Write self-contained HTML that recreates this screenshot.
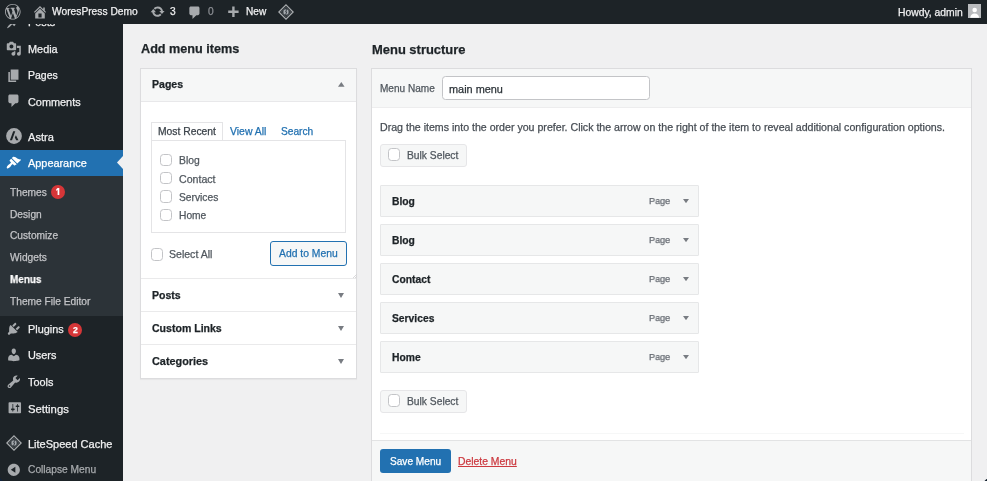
<!DOCTYPE html>
<html><head><meta charset="utf-8"><style>
html,body{margin:0;padding:0;width:987px;height:481px;overflow:hidden;background:#f0f0f1}
body{position:relative;font-family:"Liberation Sans",sans-serif}
.t{position:absolute;line-height:1;white-space:nowrap;will-change:transform;-webkit-text-stroke:0.25px currentColor}
svg{display:block}
</style></head><body>
<div style="position:absolute;left:0.00px;top:0.00px;width:987.00px;height:481.00px;background:#f0f0f1"></div>
<div style="position:absolute;left:0.00px;top:0.00px;width:123.00px;height:481.00px;background:#1d2327"></div>
<div class="t" style="left:28.00px;top:17.00px;font-size:10.90px;color:#f0f0f1;">Posts</div>
<div class="t" style="left:28.00px;top:44.00px;font-size:10.90px;color:#f0f0f1;">Media</div>
<div class="t" style="left:28.00px;top:70.00px;font-size:10.50px;color:#f0f0f1;">Pages</div>
<div class="t" style="left:28.00px;top:97.00px;font-size:10.90px;color:#f0f0f1;">Comments</div>
<div class="t" style="left:28.00px;top:132.00px;font-size:11.10px;color:#f0f0f1;">Astra</div>
<div style="position:absolute;left:0.00px;top:149.60px;width:123.00px;height:26.40px;background:#2271b1"></div>
<div class="t" style="left:28.00px;top:158.00px;font-size:10.90px;color:#fff;">Appearance</div>
<svg style="position:absolute;left:117.00px;top:156.40px" width="6.00" height="13.00" viewBox="0 0 6 13"><path d="M6 0 L0 6.5 L6 13Z" fill="#f0f0f1"/></svg>
<div style="position:absolute;left:0.00px;top:176.00px;width:123.00px;height:139.60px;background:#2c3338"></div>
<div class="t" style="left:9.60px;top:188.00px;font-size:10.20px;color:#c3c4c7;">Themes</div>
<div style="position:absolute;left:50.80px;top:184.90px;width:14.00px;height:14.00px;background:#d63638;border-radius:50%"></div>
<svg style="position:absolute;left:55.60px;top:188.30px" width="4.00" height="7.00" viewBox="0 0 4 7"><path fill="#fff" d="M1.6 0H3.3V7H1.6V2.1L0.2 2.9V1.2z"/></svg>
<div class="t" style="left:9.60px;top:210.00px;font-size:10.20px;color:#c3c4c7;">Design</div>
<div class="t" style="left:9.60px;top:231.00px;font-size:10.20px;color:#c3c4c7;">Customize</div>
<div class="t" style="left:9.60px;top:253.00px;font-size:10.20px;color:#c3c4c7;">Widgets</div>
<div class="t" style="left:9.60px;top:274.00px;font-size:11.11px;color:#fff;font-weight:700;transform:scaleX(0.8929);transform-origin:0 0;">Menus</div>
<div class="t" style="left:9.60px;top:297.00px;font-size:10.20px;color:#c3c4c7;">Theme File Editor</div>
<div class="t" style="left:28.00px;top:324.00px;font-size:10.90px;color:#f0f0f1;">Plugins</div>
<div style="position:absolute;left:68.20px;top:323.20px;width:14.20px;height:14.00px;background:#d63638;border-radius:50%"></div>
<div class="t" style="left:72.90px;top:326.00px;font-size:8.60px;color:#fff;font-weight:700;">2</div>
<div class="t" style="left:28.00px;top:350.00px;font-size:10.90px;color:#f0f0f1;">Users</div>
<div class="t" style="left:28.00px;top:377.00px;font-size:10.90px;color:#f0f0f1;">Tools</div>
<div class="t" style="left:28.00px;top:404.00px;font-size:11.30px;color:#f0f0f1;">Settings</div>
<div class="t" style="left:28.00px;top:439.00px;font-size:11.00px;color:#f0f0f1;">LiteSpeed Cache</div>
<div class="t" style="left:28.00px;top:465.00px;font-size:10.22px;color:#a7aaad;">Collapse Menu</div>
<svg style="position:absolute;left:6.10px;top:14.34px" width="15.60" height="15.60" viewBox="0 0 20 20" preserveAspectRatio="none"><path fill="#a7aaad" d="M10.44 3.02l1.82-1.82 6.36 6.35-1.83 1.82c-1.05-.68-2.48-.57-3.41.36l-.75.75c-.92.93-1.04 2.35-.35 3.41l-1.83 1.82-2.41-2.41-2.8 2.79c-.42.42-3.38 2.71-3.8 2.29s1.86-3.39 2.28-3.81l2.79-2.79L4.1 9.36l1.83-1.82c1.05.69 2.48.57 3.4-.36l.75-.75c.93-.92 1.05-2.35.36-3.41z"/></svg>
<svg style="position:absolute;left:6.10px;top:41.00px" width="15.60" height="15.60" viewBox="0 0 20 20" preserveAspectRatio="none"><path fill="#a7aaad" d="M13 11V4c0-.55-.45-1-1-1h-1.67L9 1H5L3.67 3H2c-.55 0-1 .45-1 1v7c0 .55.45 1 1 1h10c.55 0 1-.45 1-1zM7 4.5c1.38 0 2.5 1.12 2.5 2.5S8.38 9.5 7 9.5 4.5 8.38 4.5 7 5.62 4.5 7 4.5zM14 6h5v10.5c0 1.38-1.12 2.5-2.5 2.5S14 17.88 14 16.5s1.12-2.5 2.5-2.5c.17 0 .34.02.5.05V9h-3V6zm-4 8.05V13h2v3.5c0 1.38-1.12 2.5-2.5 2.5S7 17.88 7 16.5 8.12 14 9.5 14c.17 0 .34.02.5.05z"/></svg>
<svg style="position:absolute;left:6.19px;top:67.50px" width="15.60" height="15.60" viewBox="0 0 20 20" preserveAspectRatio="none"><path fill="#a7aaad" d="M6 15V2h10v13H6zm-1 1h8v2H3V5h2v11z"/></svg>
<svg style="position:absolute;left:6.19px;top:93.10px" width="15.60" height="15.60" viewBox="0 0 20 20" preserveAspectRatio="none"><path fill="#a7aaad" d="M5 2h9c1.1 0 2 .9 2 2v7c0 1.1-.9 2-2 2h-2l-5 5v-5H5c-1.1 0-2-.9-2-2V4c0-1.1.9-2 2-2z"/></svg>
<svg style="position:absolute;left:6.00px;top:128.30px" width="16.00" height="16.00" viewBox="0 0 16 16"><circle cx="8" cy="8" r="7.9" fill="#a7aaad"/><path fill="#1d2327" d="M7.2 3.3h2.1L6.0 12.3H3.9z M9.9 7.3l2.6 5h-2.3l-1.4-2.8z"/></svg>
<svg style="position:absolute;left:5.73px;top:154.57px" width="15.60" height="15.60" viewBox="0 0 20 20" preserveAspectRatio="none"><path fill="#fff" d="M14.48 11.06L7.41 3.99l1.5-1.5c.5-.56 2.3-.47 3.51.32 1.21.8 1.43 1.28 2.91 2.1 1.18.64 2.45 1.26 4.45.85zm-.71.71L6.7 4.7 4.93 6.47c-.39.39-.39 1.02 0 1.41l1.06 1.06c.39.39.39 1.03 0 1.42-.6.6-1.43 1.11-2.21 1.69-.35.26-.7.53-1.01.84C1.43 14.23.4 16.08 1.2 16.89c.8.8 2.66-.23 4.02-1.59.3-.31.58-.66.84-1.01.58-.78 1.09-1.61 1.69-2.21.39-.39 1.02-.39 1.41 0l1.06 1.06c.39.39 1.02.39 1.41 0z"/></svg>
<svg style="position:absolute;left:6.20px;top:321.20px" width="15.60" height="15.60" viewBox="0 0 20 20" preserveAspectRatio="none"><path fill="#a7aaad" d="M13.11 4.36L9.87 7.6 8 5.73l3.24-3.24c.35-.34 1.05-.2 1.56.32.52.51.66 1.21.31 1.55zm-8 1.77l.91-1.12 9.01 9.01-1.19.84c-.71.71-2.63 1.16-3.82 1.16H6.14L4.9 17.26c-.59.59-1.54.59-2.12 0-.59-.58-.59-1.53 0-2.12l1.24-1.24v-3.88c0-1.13.4-3.19 1.09-3.89zm7.26 3.97l3.24-3.24c.34-.35 1.04-.21 1.55.31.52.51.66 1.21.31 1.55l-3.24 3.25z"/></svg>
<svg style="position:absolute;left:6.10px;top:347.44px" width="15.60" height="15.60" viewBox="0 0 20 20" preserveAspectRatio="none"><path fill="#a7aaad" d="M10 9.25c-2.27 0-2.73-3.44-2.73-3.44C7 4.02 7.82 2 9.97 2c2.16 0 2.98 2.02 2.71 3.81 0 0-.41 3.44-2.68 3.44zm0 2.57L12.72 10c2.39 0 4.52 2.33 4.52 4.53v2.49s-3.65 1.13-7.24 1.13c-3.65 0-7.240-1.130-7.240-1.130v-2.490c0-2.250 1.940-4.480 4.470-4.480z"/></svg>
<svg style="position:absolute;left:6.10px;top:373.68px" width="15.60" height="15.60" viewBox="0 0 20 20" preserveAspectRatio="none"><path fill="#a7aaad" d="M16.68 9.77c-1.34 1.34-3.3 1.67-4.95.99l-5.41 6.52c-.99.99-2.59.99-3.58 0s-.99-2.59 0-3.57l6.52-5.42c-.68-1.65-.35-3.61.99-4.95 1.28-1.28 3.12-1.62 4.72-1.06l-2.89 2.89 2.82 2.82 2.86-2.87c.53 1.58.18 3.39-1.08 4.65zM3.81 16.21c.4.39 1.04.39 1.43 0 .4-.4.4-1.04 0-1.43-.39-.4-1.03-.4-1.43 0-.39.39-.39 1.03 0 1.430z"/></svg>
<svg style="position:absolute;left:6.50px;top:400.40px" width="15.60" height="15.60" viewBox="0 0 20 20" preserveAspectRatio="none"><path fill="#a7aaad" d="M18 16V4c0-.55-.45-1-1-1H3c-.55 0-1 .45-1 1v12c0 .55.45 1 1 1h14c.55 0 1-.45 1-1zM8 11h1c.55 0 1 .45 1 1s-.45 1-1 1H8v1.5c0 .28-.22.5-.5.5s-.5-.22-.5-.5V13H6c-.55 0-1-.45-1-1s.45-1 1-1h1V5.5c0-.28.22-.5.5-.5s.5.22.5.5V11zm5-2h-1c-.55 0-1-.45-1-1s.45-1 1-1h1V5.5c0-.28.22-.5.5-.5s.5.22.5.5V7h1c.55 0 1 .45 1 1s-.45 1-1 1h-1v5.5c0 .28-.22.5-.5.5s-.5-.22-.5-.5V9z"/></svg>
<svg style="position:absolute;left:5.80px;top:434.80px" width="16.00" height="16.00" viewBox="0 0 16 16"><path fill="none" stroke="#a7aaad" stroke-width="1.3" d="M8 0.9L15.1 8 8 15.1 0.9 8z"/><path fill="none" stroke="#5f656b" stroke-width="0.9" d="M8 3.4L12.6 8 8 12.6 3.4 8z"/><circle cx="8" cy="8" r="2.7" fill="#a3a8ad"/><path stroke="#3a4046" stroke-width="1" fill="none" d="M8.7 5.2L7.7 8h1l-1.2 2.9"/></svg>
<svg style="position:absolute;left:6.20px;top:461.80px" width="15.60" height="15.60" viewBox="0 0 20 20" preserveAspectRatio="none"><path fill="#a7aaad" d="M10 2.16c4.33 0 7.84 3.51 7.84 7.84s-3.51 7.84-7.84 7.84S2.16 14.33 2.16 10 5.710 2.160 10 2.160zm2 11.720V6.120L6.180 9.970z"/></svg>
<div style="position:absolute;left:0.00px;top:0.00px;width:987.00px;height:24.00px;background:#1d2327"></div>
<svg style="position:absolute;left:5.30px;top:4.10px" width="15.60" height="15.60" viewBox="0 0 20 20" preserveAspectRatio="none"><path fill="#a7aaad" d="M20 10c0-5.51-4.49-10-10-10C4.48 0 0 4.49 0 10c0 5.52 4.48 10 10 10 5.51 0 10-4.48 10-10zM7.78 15.370L4.37 6.22c.55-.02 1.170-.08 1.170-.08.5-.06.44-1.130-.06-1.11 0 0-1.45.11-2.37.11-.18 0-.37 0-.58-.01C4.12 2.69 6.87 1.110 10 1.110c2.330 0 4.45.87 6.05 2.340-.68-.11-1.65.39-1.65 1.580 0 .74.45 1.360.9 2.100.35.61.55 1.360.55 2.460 0 1.490-1.4 5-1.4 5l-3.030-8.370c.54-.02.82-.17.82-.17.5-.05.44-1.250-.06-1.220 0 0-1.440.12-2.380.12-.87 0-2.330-.12-2.330-.12-.5-.03-.56 1.200-.06 1.220l.92.08 1.260 3.410zM17.410 10c.24-.64.74-1.870.43-4.250.7 1.290 1.050 2.710 1.050 4.250 0 3.290-1.730 6.240-4.400 7.780.97-2.590 1.940-5.200 2.920-7.780zM6.100 18.090C3.120 16.650 1.110 13.530 1.110 10c0-1.300.23-2.480.72-3.590C3.250 10.300 4.670 14.200 6.100 18.090zm4.030-6.630l2.580 6.980c-.86.29-1.760.45-2.710.45-.79 0-1.570-.11-2.290-.33.81-2.380 1.620-4.740 2.420-7.100z"/></svg>
<svg style="position:absolute;left:32.30px;top:3.80px" width="16.00" height="16.00" viewBox="0 0 20 20" preserveAspectRatio="none"><path fill="#a7aaad" d="M16 8.5l1.53 1.53-1.06 1.06L10 4.620l-6.470 6.470-1.060-1.060L10 2.500l4 4v-2h2v4zm-6-2.460l6 5.990V18H4v-5.970zM12 17v-5H8v5h4z"/></svg>
<div class="t" style="left:52.30px;top:7.00px;font-size:10.24px;color:#f0f0f1;">WoresPress Demo</div>
<svg style="position:absolute;left:149.70px;top:3.95px" width="15.20" height="15.20" viewBox="0 0 20 20" preserveAspectRatio="none"><path fill="#a7aaad" d="M10.2 3.28c3.53 0 6.43 2.61 6.92 6h2.08l-3.5 4-3.5-4h2.32c-.45-1.97-2.21-3.44-4.32-3.440-1.450 0-2.730.71-3.540 1.780L4.950 5.660C6.230 4.200 8.110 3.280 10.200 3.280zm-.4 13.440c-3.520 0-6.430-2.610-6.920-6H.8l3.5-4c1.170 1.330 2.330 2.670 3.500 4H5.480c.45 1.970 2.210 3.440 4.320 3.440 1.450 0 2.730-.71 3.540-1.780l1.710 1.950c-1.280 1.460-3.150 2.390-5.250 2.390z"/></svg>
<div class="t" style="left:169.60px;top:7.00px;font-size:10.20px;color:#f0f0f1;">3</div>
<svg style="position:absolute;left:187.29px;top:4.75px" width="15.60" height="15.60" viewBox="0 0 20 20" preserveAspectRatio="none"><path fill="#a7aaad" d="M5 2h9c1.1 0 2 .9 2 2v7c0 1.1-.9 2-2 2h-2l-5 5v-5H5c-1.1 0-2-.9-2-2V4c0-1.1.9-2 2-2z"/></svg>
<div class="t" style="left:207.70px;top:7.00px;font-size:10.20px;color:#8c8f94;">0</div>
<svg style="position:absolute;left:225.05px;top:5.35px" width="16.00" height="16.00" viewBox="0 0 20 20" preserveAspectRatio="none"><path fill="#a7aaad" d="M17 7v3h-5v5H9v-5H4V7h5V2h3v5h5z"/></svg>
<div class="t" style="left:245.80px;top:7.00px;font-size:10.10px;color:#f0f0f1;">New</div>
<svg style="position:absolute;left:277.50px;top:3.60px" width="16.00" height="16.00" viewBox="0 0 16 16"><path fill="none" stroke="#a7aaad" stroke-width="1.3" d="M8 0.9L15.1 8 8 15.1 0.9 8z"/><path fill="none" stroke="#5f656b" stroke-width="0.9" d="M8 3.4L12.6 8 8 12.6 3.4 8z"/><circle cx="8" cy="8" r="2.7" fill="#a3a8ad"/><path stroke="#3a4046" stroke-width="1" fill="none" d="M8.7 5.2L7.7 8h1l-1.2 2.9"/></svg>
<div class="t" style="left:897.90px;top:8.00px;font-size:10.35px;color:#f0f0f1;">Howdy, admin</div>
<div style="position:absolute;left:967.60px;top:4.40px;width:13.30px;height:13.80px;background:#b9bbbe"></div>
<svg style="position:absolute;left:967.60px;top:4.40px" width="13.30" height="13.80" viewBox="0 0 13.3 13.8"><circle cx="6.65" cy="6.0" r="2.3" fill="#fff"/><path fill="#fff" d="M2.3 13.8c0-2.6 1.8-4.4 4.35-4.4s4.35 1.8 4.35 4.4z"/></svg>
<div class="t" style="left:140.80px;top:43.00px;font-size:12.65px;color:#1d2327;font-weight:700;">Add menu items</div>
<div class="t" style="left:372.10px;top:44.00px;font-size:12.95px;color:#1d2327;font-weight:700;">Menu structure</div>
<div style="position:absolute;left:140.00px;top:68.00px;width:217.00px;height:311.00px;background:#fff;border:1px solid #dcdcde;box-sizing:border-box;box-shadow:0 1px 1px rgba(0,0,0,.04)"></div>
<div style="position:absolute;left:141.00px;top:69.00px;width:215.00px;height:33.00px;background:#f6f7f7;border-bottom:1px solid #e8e8ea;box-sizing:border-box"></div>
<div class="t" style="left:151.90px;top:79.00px;font-size:10.56px;color:#1d2327;font-weight:700;">Pages</div>
<svg style="position:absolute;left:338.00px;top:82.00px" width="6.60" height="4.80" viewBox="0 0 6.6 4.8"><path fill="#787c82" d="M3.3 0L6.6 4.8H0z"/></svg>
<div style="position:absolute;left:151.20px;top:140.00px;width:195.30px;height:93.30px;border:1px solid #e4e4e6;box-sizing:border-box"></div>
<div style="position:absolute;left:151.20px;top:122.00px;width:72.30px;height:18.00px;border:1px solid #e4e4e6;border-bottom:none;background:#fff;box-sizing:border-box"></div>
<div class="t" style="left:158.00px;top:127.00px;font-size:10.33px;color:#3c434a;">Most Recent</div>
<div class="t" style="left:230.20px;top:127.00px;font-size:10.45px;color:#2271b1;">View All</div>
<div class="t" style="left:281.00px;top:127.00px;font-size:10.19px;color:#2271b1;">Search</div>
<div style="position:absolute;left:160.00px;top:153.60px;width:12.40px;height:12.40px;border:1px solid #c3c4c7;border-radius:3.5px;background:#fff;box-sizing:border-box"></div>
<div class="t" style="left:178.70px;top:156.00px;font-size:10.34px;color:#50575e;">Blog</div>
<div style="position:absolute;left:160.00px;top:171.90px;width:12.40px;height:12.40px;border:1px solid #c3c4c7;border-radius:3.5px;background:#fff;box-sizing:border-box"></div>
<div class="t" style="left:178.70px;top:174.00px;font-size:10.62px;color:#50575e;">Contact</div>
<div style="position:absolute;left:160.00px;top:190.20px;width:12.40px;height:12.40px;border:1px solid #c3c4c7;border-radius:3.5px;background:#fff;box-sizing:border-box"></div>
<div class="t" style="left:178.70px;top:193.00px;font-size:10.25px;color:#50575e;">Services</div>
<div style="position:absolute;left:160.00px;top:208.50px;width:12.40px;height:12.40px;border:1px solid #c3c4c7;border-radius:3.5px;background:#fff;box-sizing:border-box"></div>
<div class="t" style="left:178.70px;top:211.00px;font-size:10.23px;color:#50575e;">Home</div>
<div style="position:absolute;left:151.10px;top:248.20px;width:12.40px;height:12.40px;border:1px solid #c3c4c7;border-radius:3.5px;background:#fff;box-sizing:border-box"></div>
<div class="t" style="left:169.00px;top:249.00px;font-size:10.55px;color:#50575e;">Select All</div>
<div style="position:absolute;left:270.00px;top:241.30px;width:77.30px;height:24.40px;border:1px solid #2271b1;border-radius:3px;background:#f6f7f7;box-sizing:border-box"></div>
<div class="t" style="left:279.30px;top:249.00px;font-size:10.35px;color:#2271b1;">Add to Menu</div>
<svg style="position:absolute;left:351.50px;top:273.50px" width="5.00" height="5.00" viewBox="0 0 5 5"><path stroke="#c8c9cc" stroke-width=".7" d="M4.5 .5L.5 4.5 M4.5 2.5L2.5 4.5"/></svg>
<div style="position:absolute;left:141.00px;top:278.00px;width:215.00px;height:1.00px;background:#eaeaeb"></div>
<div class="t" style="left:151.70px;top:290.00px;font-size:10.54px;color:#1d2327;font-weight:700;">Posts</div>
<div style="position:absolute;left:141.00px;top:311.00px;width:215.00px;height:1.00px;background:#eaeaeb"></div>
<div class="t" style="left:151.70px;top:323.00px;font-size:10.56px;color:#1d2327;font-weight:700;">Custom Links</div>
<div style="position:absolute;left:141.00px;top:344.40px;width:215.00px;height:1.00px;background:#eaeaeb"></div>
<div class="t" style="left:151.70px;top:356.00px;font-size:10.87px;color:#1d2327;font-weight:700;">Categories</div>
<svg style="position:absolute;left:338.20px;top:293.20px" width="6.00" height="5.00" viewBox="0 0 6 5"><path fill="#787c82" d="M0 0H6L3 5z"/></svg>
<svg style="position:absolute;left:338.20px;top:326.30px" width="6.00" height="5.00" viewBox="0 0 6 5"><path fill="#787c82" d="M0 0H6L3 5z"/></svg>
<svg style="position:absolute;left:338.20px;top:359.40px" width="6.00" height="5.00" viewBox="0 0 6 5"><path fill="#787c82" d="M0 0H6L3 5z"/></svg>
<div style="position:absolute;left:371.00px;top:68.00px;width:601.00px;height:422.00px;background:#fff;border:1px solid #dcdcde;box-sizing:border-box"></div>
<div style="position:absolute;left:372.00px;top:69.00px;width:599.00px;height:39.00px;background:#f6f7f7;border-bottom:1px solid #ededee;box-sizing:border-box"></div>
<div class="t" style="left:380.40px;top:84.00px;font-size:10.06px;color:#50575e;">Menu Name</div>
<div style="position:absolute;left:442.30px;top:76.20px;width:208.20px;height:23.40px;border:1px solid #c3c4c7;border-radius:3.5px;background:#fff;box-sizing:border-box"></div>
<div class="t" style="left:449.00px;top:84.00px;font-size:10.90px;color:#2c3338;">main menu</div>
<div class="t" style="left:380.30px;top:122.00px;font-size:10.61px;color:#474d54;">Drag the items into the order you prefer. Click the arrow on the right of the item to reveal additional configuration options.</div>
<div style="position:absolute;left:379.60px;top:143.90px;width:87.10px;height:23.00px;border:1px solid #e6e6e8;border-radius:3px;background:#f6f7f7;box-sizing:border-box"></div>
<div style="position:absolute;left:387.80px;top:148.40px;width:12.40px;height:12.40px;border:1px solid #c3c4c7;border-radius:3.5px;background:#fff;box-sizing:border-box"></div>
<div class="t" style="left:406.60px;top:151.00px;font-size:10.28px;color:#50575e;">Bulk Select</div>
<div style="position:absolute;left:379.60px;top:185.00px;width:319.20px;height:31.50px;border:1px solid #e6e7e8;background:#f6f7f7;box-sizing:border-box;border-radius:1px"></div>
<div class="t" style="left:392.40px;top:197.00px;font-size:10.30px;color:#1d2327;font-weight:700;">Blog</div>
<div class="t" style="left:648.80px;top:196.00px;font-size:9.62px;color:#646970;transform:scaleX(0.9434);transform-origin:0 0;">Page</div>
<svg style="position:absolute;left:683.00px;top:199.00px" width="6.00" height="4.20" viewBox="0 0 6 4.2"><path fill="#787c82" d="M0 0H6L3 4.2z"/></svg>
<div style="position:absolute;left:379.60px;top:224.00px;width:319.20px;height:31.50px;border:1px solid #e6e7e8;background:#f6f7f7;box-sizing:border-box;border-radius:1px"></div>
<div class="t" style="left:392.40px;top:236.00px;font-size:10.30px;color:#1d2327;font-weight:700;">Blog</div>
<div class="t" style="left:648.80px;top:235.00px;font-size:9.62px;color:#646970;transform:scaleX(0.9434);transform-origin:0 0;">Page</div>
<svg style="position:absolute;left:683.00px;top:238.00px" width="6.00" height="4.20" viewBox="0 0 6 4.2"><path fill="#787c82" d="M0 0H6L3 4.2z"/></svg>
<div style="position:absolute;left:379.60px;top:263.00px;width:319.20px;height:31.50px;border:1px solid #e6e7e8;background:#f6f7f7;box-sizing:border-box;border-radius:1px"></div>
<div class="t" style="left:392.40px;top:275.00px;font-size:10.30px;color:#1d2327;font-weight:700;">Contact</div>
<div class="t" style="left:648.80px;top:274.00px;font-size:9.62px;color:#646970;transform:scaleX(0.9434);transform-origin:0 0;">Page</div>
<svg style="position:absolute;left:683.00px;top:277.00px" width="6.00" height="4.20" viewBox="0 0 6 4.2"><path fill="#787c82" d="M0 0H6L3 4.2z"/></svg>
<div style="position:absolute;left:379.60px;top:302.00px;width:319.20px;height:31.50px;border:1px solid #e6e7e8;background:#f6f7f7;box-sizing:border-box;border-radius:1px"></div>
<div class="t" style="left:392.40px;top:314.00px;font-size:10.30px;color:#1d2327;font-weight:700;">Services</div>
<div class="t" style="left:648.80px;top:313.00px;font-size:9.62px;color:#646970;transform:scaleX(0.9434);transform-origin:0 0;">Page</div>
<svg style="position:absolute;left:683.00px;top:316.00px" width="6.00" height="4.20" viewBox="0 0 6 4.2"><path fill="#787c82" d="M0 0H6L3 4.2z"/></svg>
<div style="position:absolute;left:379.60px;top:341.00px;width:319.20px;height:31.50px;border:1px solid #e6e7e8;background:#f6f7f7;box-sizing:border-box;border-radius:1px"></div>
<div class="t" style="left:392.40px;top:353.00px;font-size:10.30px;color:#1d2327;font-weight:700;">Home</div>
<div class="t" style="left:648.80px;top:352.00px;font-size:9.62px;color:#646970;transform:scaleX(0.9434);transform-origin:0 0;">Page</div>
<svg style="position:absolute;left:683.00px;top:355.00px" width="6.00" height="4.20" viewBox="0 0 6 4.2"><path fill="#787c82" d="M0 0H6L3 4.2z"/></svg>
<div style="position:absolute;left:379.60px;top:389.80px;width:87.10px;height:23.00px;border:1px solid #e6e6e8;border-radius:3px;background:#f6f7f7;box-sizing:border-box"></div>
<div style="position:absolute;left:387.80px;top:394.30px;width:12.40px;height:12.40px;border:1px solid #c3c4c7;border-radius:3.5px;background:#fff;box-sizing:border-box"></div>
<div class="t" style="left:406.60px;top:397.00px;font-size:10.28px;color:#50575e;">Bulk Select</div>
<div style="position:absolute;left:380.00px;top:432.50px;width:583.50px;height:1.00px;background:#f6f7f7"></div>
<div style="position:absolute;left:372.00px;top:440.00px;width:599.00px;height:50.00px;background:#f6f7f7;border-top:1px solid #e2e3e4;box-sizing:border-box"></div>
<div style="position:absolute;left:379.70px;top:449.00px;width:71.10px;height:24.20px;background:#2271b1;border-radius:3px"></div>
<div class="t" style="left:389.60px;top:457.00px;font-size:10.12px;color:#fff;">Save Menu</div>
<div class="t" style="left:458.30px;top:457.00px;font-size:10.39px;color:#cc3a40;text-decoration:underline;text-decoration-thickness:0.8px;">Delete Menu</div>
<svg style="position:absolute;left:983.50px;top:477.50px" width="3.50" height="3.50" viewBox="0 0 3.5 3.5"><path fill="#13202e" d="M3.5 0V3.5H0z"/></svg>
<svg style="position:absolute;left:0.00px;top:478.00px" width="3.00" height="3.00" viewBox="0 0 3 3"><path fill="#13233a" d="M0 0V3H3z"/></svg>
</body></html>
